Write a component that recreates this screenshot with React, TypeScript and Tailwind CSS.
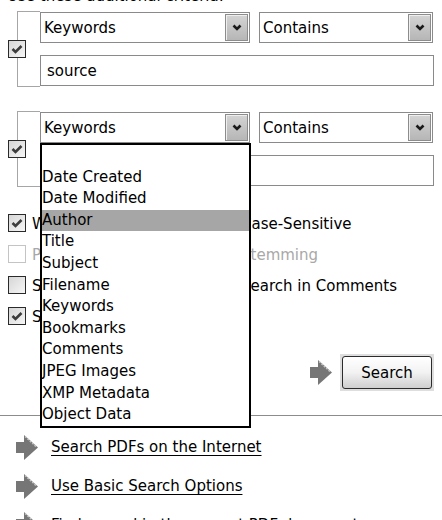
import React from "react";

const font = { fontFamily: '"DejaVu Sans", Verdana, sans-serif' };

function Check({ checked = false, disabled = false }: { checked?: boolean; disabled?: boolean }) {
  return (
    <div
      className={
        "w-[18px] h-[18px] shrink-0 border flex items-center justify-center " +
        (disabled
          ? "border-[#c4c4c4] bg-white"
          : "border-[#2a2a2a] bg-gradient-to-br from-[#d6d6d6] to-[#f6f6f6]")
      }
    >
      {checked && (
        <svg width="16" height="16" viewBox="0 0 16 16">
          <path d="M3.5 8 L6.5 11 L12.5 5" fill="none" stroke="#3c3c3c" strokeWidth="2.6" />
        </svg>
      )}
    </div>
  );
}

function DropButton() {
  return (
    <div className="w-[23px] self-stretch m-[1px] border border-[#8c8c8c] bg-gradient-to-b from-[#d4d4d4] to-[#b6b6b6] flex items-center justify-center shadow-[inset_1px_1px_0_#efefef]">
      <svg width="10" height="7" viewBox="0 0 10 7">
        <path d="M1.5 1.5 L5 5 L8.5 1.5" fill="none" stroke="#1a1a1a" strokeWidth="2.6" />
      </svg>
    </div>
  );
}

function Select({ value, className }: { value: string; className: string }) {
  return (
    <div className={"h-[31px] border border-[#8a8a8a] bg-white flex items-stretch " + className}>
      <div className="flex-1 pl-[3px] flex items-center text-black">{value}</div>
      <DropButton />
    </div>
  );
}

function Arrow({ w = 22, h = 25 }: { w?: number; h?: number }) {
  return (
    <svg width={w} height={h} viewBox="0 0 22 25" className="shrink-0">
      <rect x="0" y="7" width="11" height="11" fill="#767676" />
      <polygon points="8,0 22,12.5 8,25" fill="#767676" />
      <path d="M9 1.5 L20.5 12" stroke="#c8c8c8" strokeWidth="1.4" strokeDasharray="2 1.2" />
    </svg>
  );
}

function Criterion({ text, children }: { text?: string; children?: React.ReactNode }) {
  return (
    <div className="relative flex ml-[17px] mr-[8px]">
      <div className="relative w-[23px] shrink-0 border-l border-y border-[#a6a6a6] my-[-1px]">
        <div className="absolute left-[-10px] top-1/2 -translate-y-1/2">
          <Check checked />
        </div>
      </div>
      <div className="flex-1 flex flex-col gap-[12px]">
        <div className="flex gap-[9px]">
          <Select value="Keywords" className="w-[210px]" />
          <Select value="Contains" className="w-[174px]" />
        </div>
        <div className="h-[31px] border border-[#8a8a8a] bg-white flex items-center pl-[6px] text-black">
          {text}
        </div>
      </div>
      {children}
    </div>
  );
}

const listItems = [
  "",
  "Date Created",
  "Date Modified",
  "Author",
  "Title",
  "Subject",
  "Filename",
  "Keywords",
  "Bookmarks",
  "Comments",
  "JPEG Images",
  "XMP Metadata",
  "Object Data",
];

// Open field menu of the second criterion's first select
function FieldList() {
  return (
    <div className="absolute left-[23px] top-[31px] w-[211px] border-2 border-black bg-white z-10">
      {listItems.map((item, i) => (
        <div
          key={i}
          className={
            "h-[21.6px] leading-[21.6px] whitespace-nowrap text-black " +
            (item === "Author" ? "bg-[#a6a6a6]" : "")
          }
        >
          {item}
        </div>
      ))}
    </div>
  );
}

function Option({
  label,
  checked = false,
  disabled = false,
}: {
  label: string;
  checked?: boolean;
  disabled?: boolean;
}) {
  return (
    <div className="h-[31px] flex items-center gap-[6px] whitespace-nowrap">
      <Check checked={checked} disabled={disabled} />
      <span className={"pt-[2px] " + (disabled ? "text-[#a8a8a8]" : "text-black")}>{label}</span>
    </div>
  );
}

function LinkRow({ label }: { label: string }) {
  return (
    <div className="h-[38.8px] flex items-center pl-[16px] gap-[13px]">
      <Arrow />
      <a className="underline underline-offset-[3px] text-black whitespace-nowrap">{label}</a>
    </div>
  );
}

export default function App() {
  return (
    <div
      className="w-[442px] h-[520px] overflow-hidden bg-white text-[15px] leading-[18px]"
      style={font}
    >
      <div className="pl-[7px] mt-[-13px] text-black whitespace-nowrap">Use these additional criteria:</div>

      <div className="mt-[7px]">
        <Criterion text="source" />
      </div>
      <div className="mt-[26px]">
        <Criterion>
          <FieldList />
        </Criterion>
      </div>

      <div className="mt-[21px] pl-[8px] grid grid-cols-[209px_1fr]">
        <Option label="Whole words only" checked />
        <Option label="Case-Sensitive" />
        <Option label="Proximity" disabled />
        <Option label="Stemming" disabled />
        <Option label="Search in Bookmarks" />
        <Option label="Search in Comments" />
        <Option label="Search in Attachments" checked />
        <div />
      </div>

      <div className="mt-[23px] flex items-center justify-end pr-[8px] gap-[7px]">
        <Arrow w={24} h={25} />
        <div className="p-[2px] bg-[#dedede]">
          <button className="w-[90px] h-[33px] rounded-[3px] border border-[#2c2c2c] bg-gradient-to-b from-white via-[#f2f2f2] to-[#cfcfcf] text-black">
            Search
          </button>
        </div>
      </div>

      <div className="mt-[24px] h-px bg-[#8c8c8c]" />

      <div className="mt-[12px]">
        <LinkRow label="Search PDFs on the Internet" />
        <LinkRow label="Use Basic Search Options" />
        <LinkRow label="Find a word in the current PDF document" />
      </div>
    </div>
  );
}
